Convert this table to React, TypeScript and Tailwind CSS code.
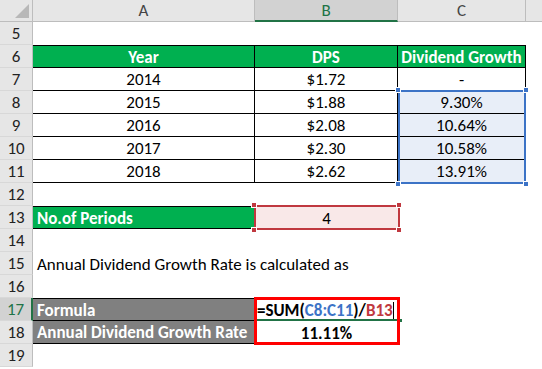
import React from 'react';
import clsx from 'clsx';

/**
 * Spreadsheet snapshot: dividend growth rate worked example.
 * Columns: row header 33px, A 222px, B 143px, C 128px, D rest.
 */

const COLS = {
  A: 'w-[222px]',
  B: 'w-[143px]',
  C: 'w-[128px]',
};

interface RowProps {
  n: number;
  active?: boolean;
  children?: React.ReactNode;
}

const Row: React.FC<RowProps> = ({ n, active, children }) => (
  <div className="flex h-[23px]">
    <div
      className={clsx(
        'w-[33px] shrink-0 flex items-center justify-center border-b border-[#d8d8d8] pt-px',
        active
          ? 'bg-[#d2d2d2] text-[#217346] border-r-2 border-r-[#217346]'
          : 'bg-[#e6e6e6] text-[#222] border-r border-r-[#bdbdbd]'
      )}
    >
      {n}
    </div>
    {children}
  </div>
);

interface CellProps {
  w: string;
  className?: string;
  children?: React.ReactNode;
}

const Cell: React.FC<CellProps> = ({ w, className, children }) => (
  <div className={clsx(w, 'shrink-0 h-full flex items-center whitespace-nowrap pt-px', className)}>
    {children}
  </div>
);

const Handle: React.FC<{ className: string; color: string }> = ({ className, color }) => (
  <div className={clsx('absolute w-[6px] h-[6px] border border-white', color, className)} />
);

const tb = 'border-r border-b border-black justify-center';

export default function App() {
  return (
    <div className="relative w-[542px] h-[369px] overflow-hidden bg-white text-black text-[17px] leading-none font-['Carlito','Calibri',Lato,sans-serif]">
      {/* column headers */}
      <div className="flex h-[22px] bg-[#e6e6e6] border-b border-[#bdbdbd] text-[#444]">
        <div className="relative w-[33px] shrink-0 border-r border-[#bdbdbd]">
          <div className="absolute right-[3px] bottom-[3px] w-0 h-0 border-l-[14px] border-l-transparent border-b-[14px] border-b-[#b8b8b8]" />
        </div>
        <div className={clsx(COLS.A, 'flex items-center justify-center border-r border-[#bdbdbd]')}>A</div>
        <div className={clsx(COLS.B, 'flex items-center justify-center border-r border-[#bdbdbd] bg-[#d2d2d2] text-[#217346] border-b-2 border-b-[#217346] -mb-px')}>B</div>
        <div className={clsx(COLS.C, 'flex items-center justify-center border-r border-[#bdbdbd]')}>C</div>
        <div className="flex-1" />
      </div>

      <Row n={5} />
      <Row n={6}>
        <Cell w={COLS.A} className={clsx(tb, 'border-t bg-[#00b050] text-white font-bold')}>Year</Cell>
        <Cell w={COLS.B} className={clsx(tb, 'border-t bg-[#00b050] text-white font-bold')}>DPS</Cell>
        <Cell w={COLS.C} className={clsx(tb, 'border-t bg-[#00b050] text-white font-bold')}>Dividend Growth</Cell>
      </Row>
      <Row n={7}>
        <Cell w={COLS.A} className={tb}>2014</Cell>
        <Cell w={COLS.B} className={tb}>$1.72</Cell>
        <Cell w={COLS.C} className={tb}>-</Cell>
      </Row>
      {[
        [8, '2015', '$1.88', '9.30%'],
        [9, '2016', '$2.08', '10.64%'],
        [10, '2017', '$2.30', '10.58%'],
        [11, '2018', '$2.62', '13.91%'],
      ].map(([n, y, d, g]) => (
        <Row key={n} n={n as number}>
          <Cell w={COLS.A} className={tb}>{y}</Cell>
          <Cell w={COLS.B} className={tb}>{d}</Cell>
          <Cell w={COLS.C} className={clsx(tb, 'bg-[#e8eef8]')}>{g}</Cell>
        </Row>
      ))}
      <Row n={12} />
      <Row n={13}>
        <Cell w={COLS.A} className="border-t border-b border-r border-black bg-[#00b050] text-white font-bold pl-[4px]">No.of Periods</Cell>
        <Cell w={COLS.B} className="justify-center bg-[#f9e8e8]">4</Cell>
      </Row>
      <Row n={14} />
      <Row n={15}>
        <Cell w={COLS.A} className="pl-[4px] overflow-visible">Annual Dividend Growth Rate is calculated as</Cell>
      </Row>
      <Row n={16} />
      <Row n={17} active>
        <Cell w={COLS.A} className="border-t border-b border-r border-black bg-[#808080] text-white font-bold pl-[4px]">Formula</Cell>
        <Cell w={COLS.B} className="font-bold pl-[2px]">
          <span>=SUM(</span>
          <span className="text-[#3c73c6]">C8:C11</span>
          <span>)/</span>
          <span className="text-[#c0383f]">B13</span>
        </Cell>
      </Row>
      <Row n={18}>
        <Cell w={COLS.A} className="border-b border-r border-black bg-[#808080] text-white font-bold pl-[4px]">Annual Dividend Growth Rate</Cell>
        <Cell w={COLS.B} className="justify-center font-bold">11.11%</Cell>
      </Row>
      <Row n={19} />

      {/* range highlight C8:C11 */}
      <div className="absolute left-[398px] top-[90px] w-[128px] h-[94px] border-2 border-[#3c73c6]" />
      <Handle color="bg-[#3c73c6]" className="left-[395px] top-[87px]" />
      <Handle color="bg-[#3c73c6]" className="left-[523px] top-[87px]" />
      <Handle color="bg-[#3c73c6]" className="left-[395px] top-[181px]" />
      <Handle color="bg-[#3c73c6]" className="left-[523px] top-[181px]" />

      {/* range highlight B13 */}
      <div className="absolute left-[254px] top-[205px] w-[146px] h-[25px] border-2 border-[#c0383f]" />
      <Handle color="bg-[#c0383f]" className="left-[251px] top-[202px]" />
      <Handle color="bg-[#c0383f]" className="left-[396px] top-[202px]" />
      <Handle color="bg-[#c0383f]" className="left-[251px] top-[227px]" />
      <Handle color="bg-[#c0383f]" className="left-[396px] top-[227px]" />

      {/* active cell B17 */}
      <div className="absolute left-[256px] top-[319px] w-[143px] h-[2px] bg-[#217346]" />
      <div className="absolute left-[398px] top-[318px] w-[5px] h-[5px] bg-[#217346] border border-white" />
      <div className="absolute left-[393px] top-[302px] w-px h-[17px] bg-black" />

      {/* red outline B17:B18 */}
      <div className="absolute left-[254px] top-[297px] w-[146px] h-[48px] border-[3px] border-[#ff0000]" />
    </div>
  );
}
